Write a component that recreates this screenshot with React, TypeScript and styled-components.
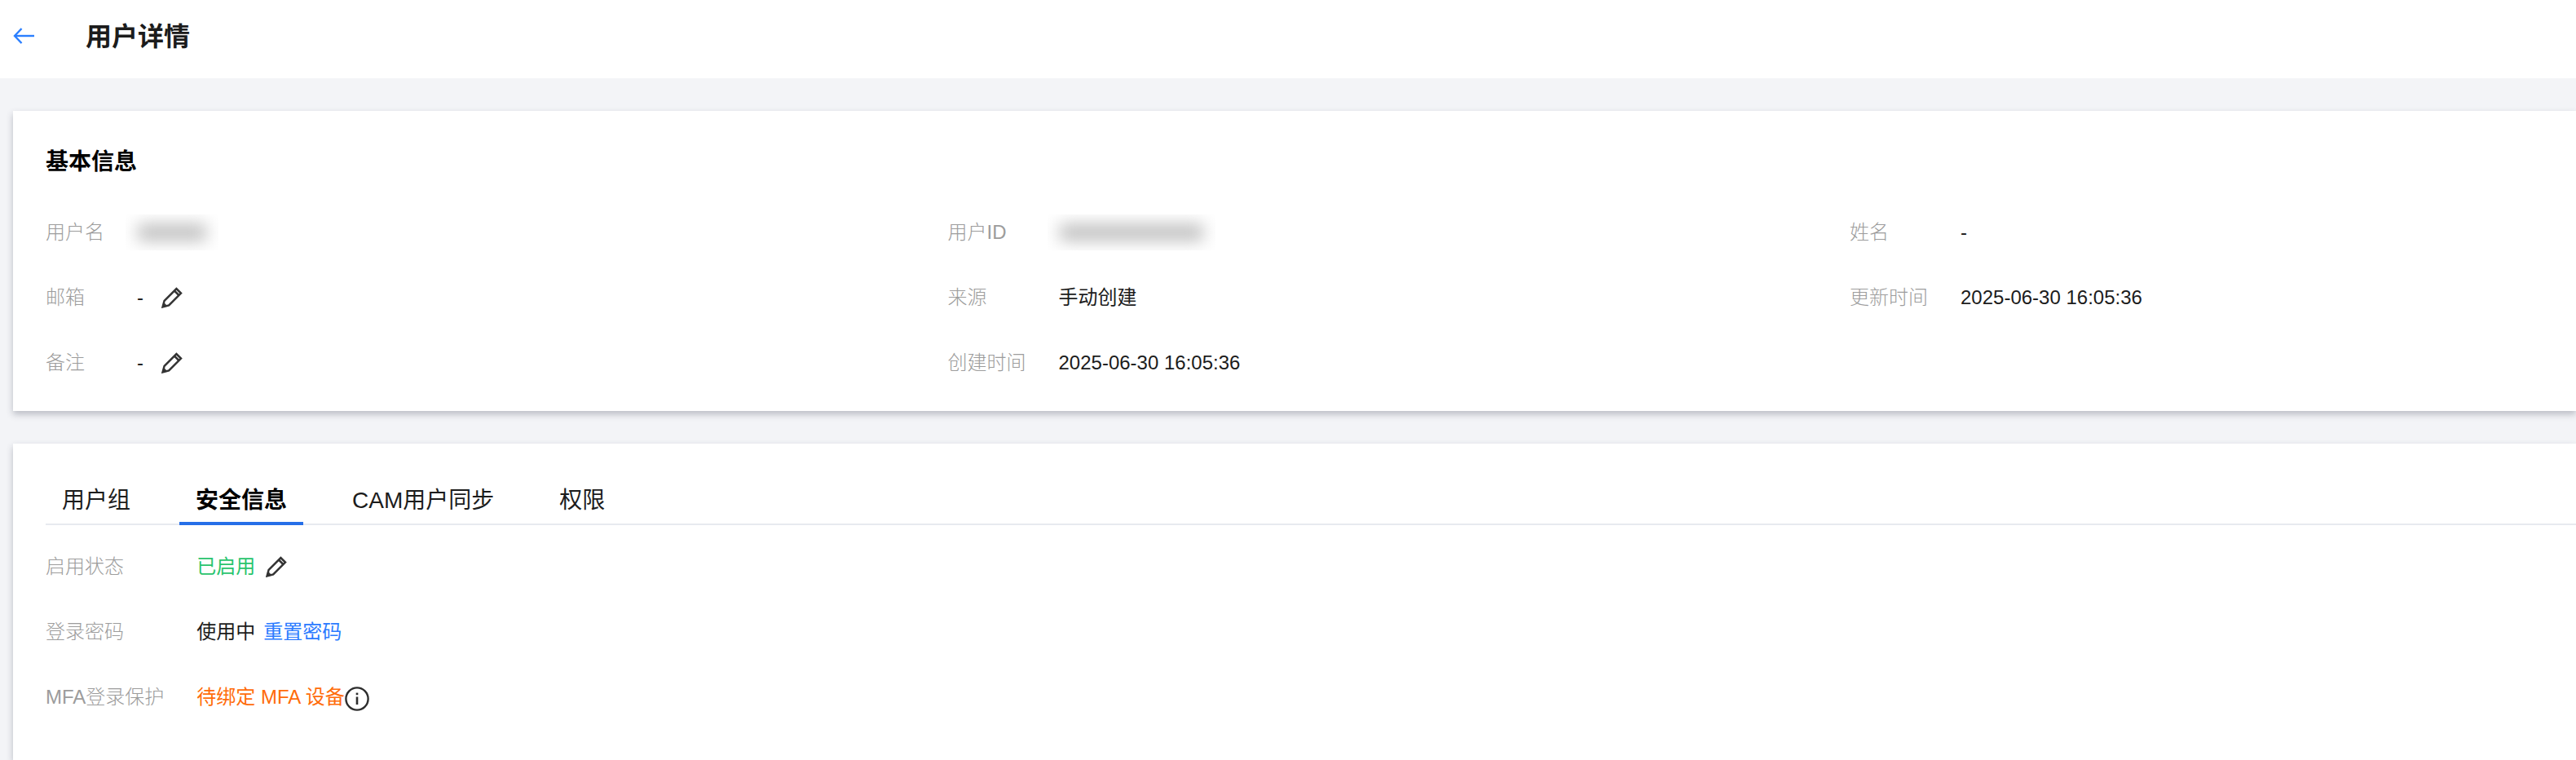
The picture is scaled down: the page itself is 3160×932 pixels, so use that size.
import styled, { createGlobalStyle } from "styled-components";

const GlobalStyle = createGlobalStyle`
  html, body {
    margin: 0;
    padding: 0;
    background: #f3f4f7;
  }
  body {
    font-family: "Liberation Sans", "Noto Sans CJK SC", sans-serif;
    font-size: 24px;
    color: #1c1c1c;
  }
`;

const BASIC_COLUMNS = [
  [
    { label: "用户名", blur: 80 },
    { label: "邮箱", value: "-", editable: true },
    { label: "备注", value: "-", editable: true },
  ],
  [
    { label: "用户ID", blur: 172 },
    { label: "来源", value: "手动创建" },
    { label: "创建时间", value: "2025-06-30 16:05:36" },
  ],
  [
    { label: "姓名", value: "-" },
    { label: "更新时间", value: "2025-06-30 16:05:36" },
  ],
];

const TABS = ["用户组", "安全信息", "CAM用户同步", "权限"];

const EditIcon = () => (
  <PencilSvg viewBox="0 0 26 26" fill="none" stroke="#333" strokeWidth="2.5" strokeLinejoin="miter">
    <path d="M1.6 24.4 L3.6 16.8 L18.4 2 L24 7.6 L9.2 22.4 Z" />
    <path d="M16 4.6 L21.4 10" />
    <path d="M1.6 24.4 L3 19.4 L6.6 23 Z" fill="#333" strokeWidth="1" />
  </PencilSvg>
);

const InfoIcon = () => (
  <InfoSvg viewBox="0 0 30 30" fill="none" stroke="#2e2e2e">
    <circle cx="15" cy="15" r="13.6" strokeWidth="2.4" />
    <path d="M15 12.5 V22" strokeWidth="2.6" />
    <path d="M15 7.6 V10.2" strokeWidth="2.6" />
  </InfoSvg>
);

const App = () => {
  return (
    <Page>
      <GlobalStyle />
      <Header>
        <BackArrow viewBox="0 0 26 22" fill="none" stroke="#2b7fff" strokeWidth="2.4">
          <path d="M26 11 H2" />
          <path d="M10.5 2 L2 11 L10.5 20" />
        </BackArrow>
        <PageTitle>用户详情</PageTitle>
      </Header>

      <Main>
        <BasicCard>
          <CardTitle>基本信息</CardTitle>
          <InfoGrid>
            {BASIC_COLUMNS.map((column, i) => (
              <InfoColumn key={i}>
                {column.map((item) => (
                  <InfoRow key={item.label}>
                    <Label>{item.label}</Label>
                    <Value>
                      {"blur" in item ? (
                        <BlurBox $width={item.blur as number}>
                          <BlurBar />
                        </BlurBox>
                      ) : (
                        item.value
                      )}
                      {"editable" in item && <EditSlot $gap={22}><EditIcon /></EditSlot>}
                    </Value>
                  </InfoRow>
                ))}
              </InfoColumn>
            ))}
          </InfoGrid>
        </BasicCard>

        <TabCard>
          <TabBar>
            {TABS.map((tab) => (
              <Tab key={tab} $active={tab === "安全信息"}>
                {tab}
              </Tab>
            ))}
          </TabBar>
          <SecurityList>
            <InfoRow>
              <Label>启用状态</Label>
              <Value>
                <Enabled>已启用</Enabled>
                <EditSlot $gap={13}><EditIcon /></EditSlot>
              </Value>
            </InfoRow>
            <InfoRow>
              <Label>登录密码</Label>
              <Value>
                使用中
                <ResetLink>重置密码</ResetLink>
              </Value>
            </InfoRow>
            <InfoRow>
              <Label>MFA登录保护</Label>
              <Value>
                <Pending>待绑定 MFA 设备</Pending>
                <InfoIcon />
              </Value>
            </InfoRow>
          </SecurityList>
        </TabCard>
      </Main>
    </Page>
  );
};

const Page = styled.div`
  display: flex;
  flex-direction: column;
  height: 932px;
  overflow: hidden;
`;

const Header = styled.header`
  align-items: center;
  background: #fff;
  display: flex;
  flex: none;
  gap: 63px;
  height: 96px;
  padding-left: 16px;
`;

const BackArrow = styled.svg`
  height: 22px;
  margin-bottom: 8px;
  width: 26px;
`;

const PageTitle = styled.h1`
  font-size: 32px;
  font-weight: 700;
  line-height: 44px;
  margin: 0 0 6px;
`;

const Main = styled.main`
  display: flex;
  flex: 1;
  flex-direction: column;
  gap: 40px;
  padding: 40px 0 0 16px;
`;

const BasicCard = styled.section`
  background: #fff;
  box-shadow: 0 4px 8px rgba(54, 58, 80, 0.3);
  height: 368px;
  box-sizing: border-box;
  padding: 42px 0 0 40px;
`;

const CardTitle = styled.h2`
  color: #000;
  font-size: 28px;
  font-weight: 700;
  line-height: 42px;
  margin: 0 0 25px;
`;

const InfoGrid = styled.div`
  display: grid;
  grid-template-columns: repeat(3, 1106.5px);
`;

const InfoColumn = styled.div`
  align-content: start;
  display: grid;
  grid-template-columns: max-content 1fr;
`;

const InfoRow = styled.div`
  align-items: center;
  column-gap: 40px;
  display: grid;
  grid-column: 1 / -1;
  grid-template-columns: subgrid;
  height: 80px;
`;

const Label = styled.span`
  color: #9c9c9c;
  font-weight: 300;
  line-height: 36px;
`;

const Value = styled.span`
  align-items: center;
  display: flex;
  line-height: 36px;
`;

const BlurBox = styled.span<{ $width: number }>`
  align-items: center;
  display: flex;
  height: 44px;
  justify-content: center;
  margin-left: -14px;
  overflow: hidden;
  width: ${({ $width }) => $width + 34}px;
`;

const BlurBar = styled.span`
  background: #bdbdbd;
  filter: blur(10px);
  flex: none;
  height: 20px;
  width: calc(100% - 30px);
`;

const EditSlot = styled.span<{ $gap: number }>`
  display: inline-flex;
  margin-left: ${({ $gap }) => $gap}px;
`;

const PencilSvg = styled.svg`
  height: 26px;
  width: 26px;
`;

const InfoSvg = styled.svg`
  height: 30px;
  margin-top: 4px;
  width: 30px;
`;

const TabCard = styled.section`
  background: #fff;
  box-shadow: 0 4px 8px rgba(54, 58, 80, 0.3);
  flex: 1;
  padding: 40px 0 0 40px;
`;

const TabBar = styled.div`
  border-bottom: 2px solid #e7eaef;
  display: flex;
  gap: 40px;
  height: 58px;
`;

const Tab = styled.div<{ $active?: boolean }>`
  border-bottom: 4px solid ${({ $active }) => ($active ? "#266fe8" : "transparent")};
  color: ${({ $active }) => ($active ? "#000" : "#1c1c1c")};
  font-size: 28px;
  font-weight: ${({ $active }) => ($active ? 700 : 400)};
  height: 60px;
  line-height: 60px;
  padding: 0 20px;
  box-sizing: border-box;
`;

const SecurityList = styled.div`
  display: grid;
  grid-template-columns: max-content 1fr;
  margin-top: 11px;
`;

const Enabled = styled.span`
  color: #29c46d;
`;

const ResetLink = styled.a`
  color: #2b7bff;
  margin-left: 10px;
`;

const Pending = styled.span`
  color: #ff6c0a;
`;

export default App;
